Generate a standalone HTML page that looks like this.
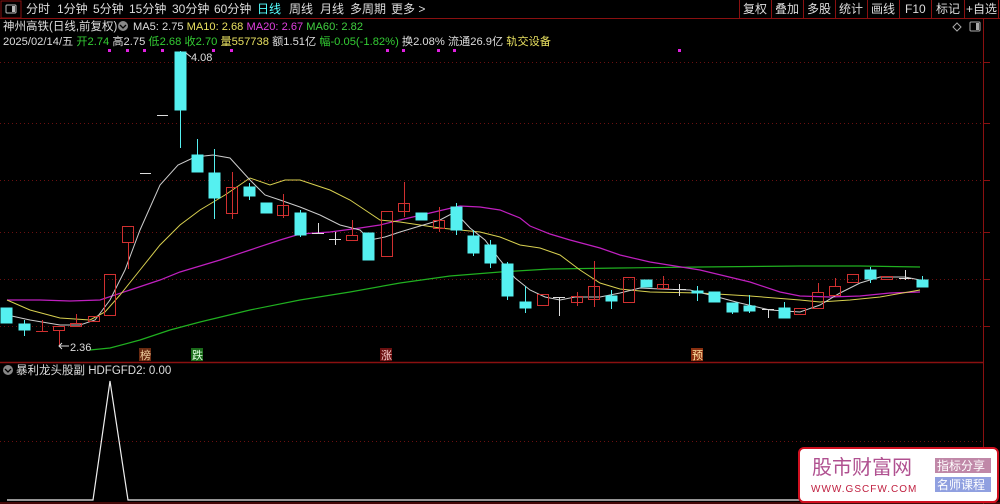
<!DOCTYPE html>
<html><head><meta charset="utf-8"><style>
html,body{margin:0;padding:0;background:#000;width:1000px;height:504px;overflow:hidden}
svg{display:block}
text{font-family:"Liberation Sans","Noto Sans CJK SC",sans-serif}
</style></head><body>
<svg width="1000" height="504" viewBox="0 0 1000 504" xmlns="http://www.w3.org/2000/svg">
<rect width="1000" height="504" fill="#000"/>
<line x1="0" y1="18.5" x2="1000" y2="18.5" stroke="#8a1010" stroke-width="1"/>
<rect x="1" y="1" width="20" height="17" fill="none" stroke="#8a1010"/>
<rect x="6" y="5" width="10" height="8" rx="1" fill="none" stroke="#bbb"/>
<rect x="12" y="6" width="3" height="6" fill="#bbb"/>
<g font-size="12" fill="#ddd">
<text x="26" y="13">分时</text><text x="57" y="13">1分钟</text><text x="93" y="13">5分钟</text>
<text x="129" y="13">15分钟</text><text x="172" y="13">30分钟</text><text x="214" y="13">60分钟</text>
<text x="257" y="13" fill="#5ff">日线</text><text x="289" y="13">周线</text><text x="320" y="13">月线</text>
<text x="350" y="13">多周期</text><text x="391" y="13">更多 &gt;</text>
</g>
<g stroke="#8a1010">
<line x1="739.5" y1="0" x2="739.5" y2="18"/><line x1="771.5" y1="0" x2="771.5" y2="18"/>
<line x1="803.5" y1="0" x2="803.5" y2="18"/><line x1="835.5" y1="0" x2="835.5" y2="18"/>
<line x1="867.5" y1="0" x2="867.5" y2="18"/><line x1="899.5" y1="0" x2="899.5" y2="18"/>
<line x1="931.5" y1="0" x2="931.5" y2="18"/><line x1="964.5" y1="0" x2="964.5" y2="18"/>
<line x1="998.5" y1="0" x2="998.5" y2="18"/>
</g>
<g font-size="12" fill="#ddd">
<text x="743" y="13">复权</text><text x="775" y="13">叠加</text><text x="807" y="13">多股</text>
<text x="839" y="13">统计</text><text x="871" y="13">画线</text><text x="905" y="13">F10</text>
<text x="936" y="13">标记</text><text x="966" y="13">+自选</text>
</g>
<line x1="983.5" y1="18" x2="983.5" y2="504" stroke="#8a1010"/>
<path d="M953 27 L957 23 L961 27 L957 31Z" fill="none" stroke="#aaa"/>
<rect x="970" y="22" width="10" height="9" rx="1" fill="none" stroke="#aaa"/>
<rect x="976" y="23" width="3" height="7" fill="#aaa"/>
<text x="3" y="30" font-size="11.5" fill="#ddd">神州高铁(日线,前复权)</text>
<circle cx="123" cy="26" r="5" fill="#888"/><path d="M120 25 L123 28 L126 25" stroke="#000" fill="none" stroke-width="1.3"/>
<text x="133" y="30" font-size="11" textLength="230" lengthAdjust="spacingAndGlyphs"><tspan fill="#ddd">MA5: 2.75 </tspan><tspan fill="#e8e060">MA10: 2.68 </tspan><tspan fill="#e040e0">MA20: 2.67 </tspan><tspan fill="#40d040">MA60: 2.82</tspan></text>
<text x="3" y="45" font-size="11" textLength="548" lengthAdjust="spacingAndGlyphs"><tspan fill="#ddd">2025/02/14/五 </tspan><tspan fill="#3c3">开2.74 </tspan><tspan fill="#ddd">高2.75 </tspan><tspan fill="#3c3">低2.68 收2.70 </tspan><tspan fill="#e8e060">量557738 </tspan><tspan fill="#ddd">额1.51亿 </tspan><tspan fill="#3c3">幅-0.05(-1.82%) </tspan><tspan fill="#ddd">换2.08% 流通26.9亿 </tspan><tspan fill="#e8e060">轨交设备</tspan></text>
<g stroke="#6a1010" stroke-dasharray="1,3">
<line x1="0" y1="62.5" x2="983" y2="62.5"/><line x1="0" y1="123.5" x2="983" y2="123.5"/>
<line x1="0" y1="180.5" x2="983" y2="180.5"/><line x1="0" y1="232.5" x2="983" y2="232.5"/>
<line x1="0" y1="279.5" x2="983" y2="279.5"/><line x1="0" y1="326.5" x2="983" y2="326.5"/>
<line x1="0" y1="441.5" x2="983" y2="441.5"/>
</g>
<g stroke="#8a1010"><line x1="983" y1="62.5" x2="990" y2="62.5"/><line x1="983" y1="123.5" x2="990" y2="123.5"/><line x1="983" y1="180.5" x2="990" y2="180.5"/><line x1="983" y1="232.5" x2="990" y2="232.5"/><line x1="983" y1="279.5" x2="990" y2="279.5"/><line x1="983" y1="326.5" x2="990" y2="326.5"/></g>
<g fill="#e020e0">
<rect x="108" y="49" width="3" height="3"/><rect x="126" y="49" width="3" height="3"/><rect x="143" y="49" width="3" height="3"/><rect x="161" y="49" width="3" height="3"/>
<rect x="212" y="49" width="3" height="3"/><rect x="230" y="49" width="3" height="3"/><rect x="386" y="49" width="3" height="3"/><rect x="402" y="49" width="3" height="3"/>
<rect x="437" y="49" width="3" height="3"/><rect x="453" y="49" width="3" height="3"/><rect x="678" y="49" width="3" height="3"/>
</g>
<polyline fill="none" stroke="#20b020" stroke-width="1.2" points="90,350 110,348 140,340 170,330 200,322 250,310 300,300 350,292 400,283 450,276 500,272 550,269 620,268 700,267 800,266 860,266 920,267"/>
<polyline fill="none" stroke="#c020c0" stroke-width="1.2" points="7,300 40,300 70,301 100,300 130,290 160,280 180,272 200,266 220,260 250,250 280,240 300,234 330,232 360,228 380,225 400,220 430,213 460,206 480,207 500,210 520,218 530,226 550,234 570,240 600,248 620,255 650,262 700,270 750,282 780,292 800,296 830,297 860,296 890,293 920,292"/>
<polyline fill="none" stroke="#d8d050" stroke-width="1" points="7,300 30,310 60,318 90,320 105,312 120,295 140,270 160,245 180,225 200,210 225,195 250,178 270,185 285,180 300,180 315,185 330,190 350,200 365,210 380,220 400,222 420,225 440,228 460,230 480,232 500,237 520,245 540,248 560,255 580,270 600,283 620,289 650,292 700,293 750,296 800,300 820,302 850,300 880,297 920,290"/>
<polyline fill="none" stroke="#ccc" stroke-width="1" points="7,315 30,320 60,325 80,325 95,320 110,300 125,270 140,230 160,185 178,165 195,157 213,155 230,158 250,180 265,195 280,200 300,207 320,215 340,225 360,230 370,240 385,237 400,232 420,226 440,220 455,212 470,228 485,240 500,260 515,278 530,290 545,297 560,300 575,297 600,297 620,293 640,288 660,289 690,290 710,295 740,303 770,310 800,312 820,305 840,293 860,283 880,277 905,277 920,280"/>
<g stroke-width="1">
<g fill="#55f0f0" stroke="#55f0f0">
<rect x="1" y="308" width="11" height="15"/>
<line x1="24.5" y1="320" x2="24.5" y2="336"/><rect x="19" y="324" width="11" height="6"/>
<line x1="180.5" y1="51" x2="180.5" y2="148"/><rect x="175" y="52" width="11" height="58"/>
<line x1="197.5" y1="139" x2="197.5" y2="172"/><rect x="192" y="155" width="11" height="17"/>
<line x1="214.5" y1="149" x2="214.5" y2="219"/><rect x="209" y="173" width="11" height="25"/>
<line x1="249.5" y1="183" x2="249.5" y2="200"/><rect x="244" y="187" width="11" height="9"/>
<rect x="261" y="203" width="11" height="10"/>
<line x1="300.5" y1="210" x2="300.5" y2="237"/><rect x="295" y="213" width="11" height="22"/>
<rect x="363" y="233" width="11" height="27"/>
<rect x="416" y="213" width="11" height="7"/>
<line x1="456.5" y1="203" x2="456.5" y2="235"/><rect x="451" y="207" width="11" height="23"/>
<line x1="473.5" y1="230" x2="473.5" y2="256"/><rect x="468" y="236" width="11" height="17"/>
<line x1="490.5" y1="240" x2="490.5" y2="268"/><rect x="485" y="245" width="11" height="18"/>
<line x1="507.5" y1="262" x2="507.5" y2="300"/><rect x="502" y="264" width="11" height="32"/>
<line x1="525.5" y1="286" x2="525.5" y2="313"/><rect x="520" y="302" width="11" height="6"/>
<line x1="611.5" y1="290" x2="611.5" y2="309"/><rect x="606" y="296" width="11" height="5"/>
<rect x="641" y="280" width="11" height="7"/>
<line x1="697.5" y1="286" x2="697.5" y2="301"/><rect x="692" y="291" width="11" height="2"/>
<rect x="709" y="292" width="11" height="10"/>
<line x1="732.5" y1="303" x2="732.5" y2="314"/><rect x="727" y="303" width="11" height="9"/>
<line x1="749.5" y1="295" x2="749.5" y2="313"/><rect x="744" y="306" width="11" height="5"/>
<line x1="784.5" y1="302" x2="784.5" y2="318"/><rect x="779" y="308" width="11" height="10"/>
<line x1="870.5" y1="267" x2="870.5" y2="283"/><rect x="865" y="270" width="11" height="9"/>
<line x1="922.5" y1="276" x2="922.5" y2="287"/><rect x="917" y="280" width="11" height="7"/>
</g>
<g fill="none" stroke="#d03030">
<line x1="42.5" y1="320" x2="42.5" y2="331"/><line x1="36" y1="331.5" x2="48" y2="331.5"/>
<line x1="59.5" y1="330" x2="59.5" y2="345"/><rect x="53.5" y="326.5" width="11" height="4"/>
<line x1="76.5" y1="314" x2="76.5" y2="323"/><rect x="70.5" y="323.5" width="11" height="3"/>
<rect x="88.5" y="316.5" width="11" height="5"/>
<rect x="104.5" y="274.5" width="11" height="41"/>
<line x1="128.5" y1="242" x2="128.5" y2="269"/><rect x="122.5" y="226.5" width="11" height="16"/>
<line x1="232.5" y1="172" x2="232.5" y2="219"/><rect x="226.5" y="187.5" width="11" height="26"/>
<line x1="283.5" y1="194" x2="283.5" y2="218"/><rect x="277.5" y="205.5" width="11" height="10"/>
<line x1="352.5" y1="220" x2="352.5" y2="235"/><rect x="346.5" y="235.5" width="11" height="5"/>
<rect x="381.5" y="211.5" width="11" height="45"/>
<line x1="404.5" y1="182" x2="404.5" y2="217"/><rect x="398.5" y="203.5" width="11" height="8"/>
<line x1="439.5" y1="207" x2="439.5" y2="232"/><rect x="433.5" y="220.5" width="11" height="8"/>
<rect x="537.5" y="294.5" width="11" height="11"/>
<line x1="577.5" y1="292" x2="577.5" y2="306"/><rect x="571.5" y="296.5" width="11" height="6"/>
<line x1="594.5" y1="261" x2="594.5" y2="307"/><rect x="588.5" y="286.5" width="11" height="13"/>
<rect x="623.5" y="277.5" width="11" height="25"/>
<line x1="663.5" y1="276" x2="663.5" y2="288"/><rect x="657.5" y="284.5" width="11" height="4"/>
<rect x="794.5" y="308.5" width="11" height="6"/>
<line x1="818.5" y1="283" x2="818.5" y2="292"/><rect x="812.5" y="292.5" width="11" height="16"/>
<line x1="835.5" y1="278" x2="835.5" y2="286"/><rect x="829.5" y="286.5" width="11" height="9"/>
<rect x="847.5" y="274.5" width="11" height="8"/>
<rect x="881.5" y="276.5" width="11" height="3"/>
</g>
<g stroke="#ddd">
<line x1="140" y1="173.5" x2="151" y2="173.5"/><line x1="157" y1="115.5" x2="168" y2="115.5"/>
<line x1="312" y1="233.5" x2="324" y2="233.5"/><line x1="318.5" y1="223" x2="318.5" y2="233"/>
<line x1="329" y1="239.5" x2="341" y2="239.5"/><line x1="335.5" y1="232" x2="335.5" y2="245"/>
<line x1="553" y1="297.5" x2="565" y2="297.5"/><line x1="559.5" y1="297" x2="559.5" y2="316"/>
<line x1="673" y1="289.5" x2="686" y2="289.5"/><line x1="679.5" y1="284" x2="679.5" y2="296"/>
<line x1="762" y1="309.5" x2="774" y2="309.5"/><line x1="768.5" y1="309" x2="768.5" y2="318"/>
<line x1="899" y1="278.5" x2="911" y2="278.5"/><line x1="905.5" y1="270" x2="905.5" y2="280"/>
</g>
</g>
<text x="191" y="61" font-size="11" fill="#ddd">4.08</text>
<line x1="186" y1="53" x2="191" y2="57" stroke="#ddd"/>
<text x="70" y="351" font-size="11" fill="#ddd">2.36</text>
<path d="M59 346 L69 346 M62 343 L59 346 L62 349" stroke="#ddd" fill="none"/>
<rect x="139" y="348" width="12" height="13" fill="#6a2a10"/><text x="140" y="359" font-size="11" fill="#f0d0a0">榜</text>
<rect x="191" y="348" width="12" height="13" fill="#1a6a1a"/><text x="192" y="359" font-size="11" fill="#e0ffe0">跌</text>
<rect x="380" y="348" width="12" height="13" fill="#6a1010"/><text x="381" y="359" font-size="11" fill="#ffd0d0">涨</text>
<rect x="691" y="348" width="12" height="13" fill="#8a3010"/><text x="692" y="359" font-size="11" fill="#ffe0a0">预</text>
<line x1="0" y1="362.5" x2="983" y2="362.5" stroke="#8a1010" stroke-width="1.5"/>
<circle cx="8" cy="370" r="5" fill="#888"/><path d="M5 369 L8 372 L11 369" stroke="#000" fill="none" stroke-width="1.3"/>
<text x="16" y="374" font-size="11.5" fill="#ddd">暴利龙头股副 HDFGFD2: 0.00</text>
<polyline fill="none" stroke="#eee" stroke-width="1.2" points="7,500 93,500 110,381 128,500 983,500"/>
<line x1="0" y1="503" x2="1000" y2="503" stroke="#8a1010"/>
<rect x="799" y="448" width="199" height="54" rx="5" fill="#fff" stroke="#d01020" stroke-width="2"/>
<text x="812" y="474" font-size="20" fill="#b05090">股市财富网</text>
<text x="811" y="492" font-size="10" fill="#c02040" font-family="Liberation Serif,serif" letter-spacing="1">WWW.GSCFW.COM</text>
<rect x="935" y="458" width="56" height="15" fill="#c088a8"/><text x="937" y="470" font-size="12" fill="#fff">指标分享</text>
<rect x="935" y="477" width="56" height="15" fill="#90a0e0"/><text x="937" y="489" font-size="12" fill="#fff">名师课程</text>
</svg>
</body></html>
